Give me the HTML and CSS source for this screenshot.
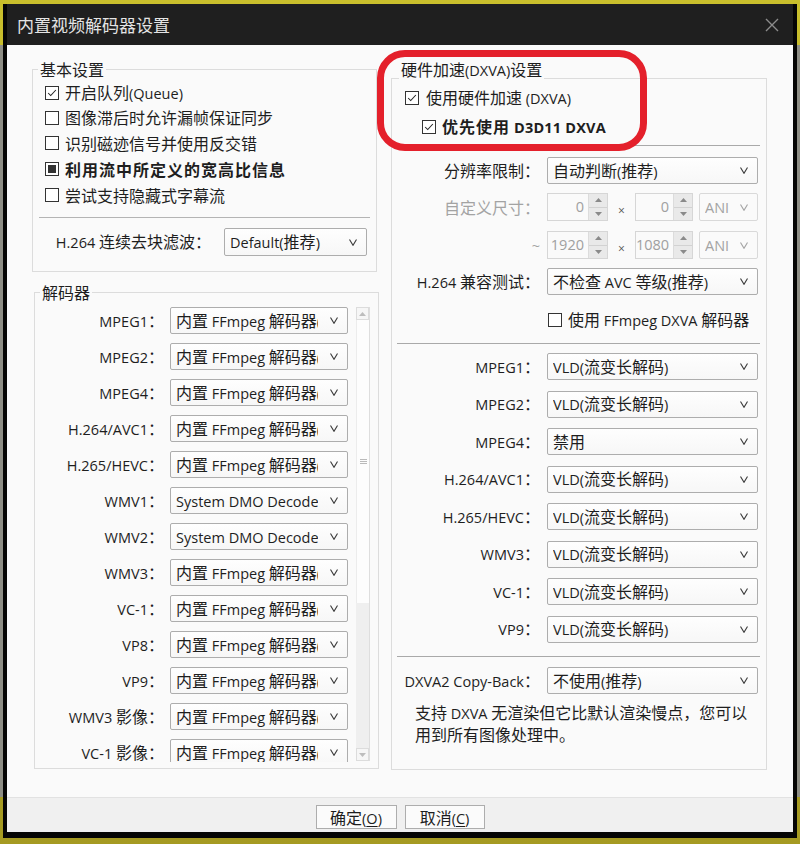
FILE: index.html
```html
<!DOCTYPE html>
<html lang="zh-CN">
<head>
<meta charset="utf-8">
<title>内置视频解码器设置</title>
<link rel="stylesheet" href="styles.css">
</head>
<body>
<div class="window">
  <div class="titlebar">
    <span class="title">内置视频解码器设置</span>
    <svg class="close" width="14" height="14" viewBox="0 0 14 14"><path d="M1 1 L13 13 M13 1 L1 13"/></svg>
  </div>
  <div class="client">
    <div class="col-left">
      <fieldset class="group basic">
        <legend>基本设置</legend>
        <div class="cbrow r25"><span class="cb on"><svg viewBox="0 0 14 14"><path d="M2.5 7 L5.5 10 L11.5 3.5"/></svg></span><span>开启队列<span class="en">(Queue)</span></span></div>
        <div class="cbrow r25"><span class="cb"></span><span>图像滞后时允许漏帧保证同步</span></div>
        <div class="cbrow r26"><span class="cb"></span><span>识别磁迹信号并使用反交错</span></div>
        <div class="cbrow r26 bold"><span class="cb mixed"><i></i></span><span>利用流中所定义的宽高比信息</span></div>
        <div class="cbrow r26"><span class="cb"></span><span>尝试支持隐藏式字幕流</span></div>
        <div class="sep basic-sep"></div>
        <div class="row deblock">
          <span class="lbl"><span class="en">H.264 </span>连续去块滤波：</span>
          <div class="sel w143"><span class="val"><span class="en">Default(</span>推荐<span class="en">)</span></span><svg class="arr" viewBox="0 0 8 7"><path d="M0.5 0.5 L4 6.3 L7.5 0.5"/></svg></div>
        </div>
      </fieldset>

      <fieldset class="group decoders">
        <legend>解码器</legend>
        <div class="viewport">
          <div class="list">
            <div class="drow"><span class="lbl"><span class="en">MPEG1</span>：</span><div class="sel w178"><span class="val">内置<span class="en"> FFmpeg </span>解码器<span class="en">(</span></span><svg class="arr" viewBox="0 0 8 7"><path d="M0.5 0.5 L4 6.3 L7.5 0.5"/></svg></div></div>
            <div class="drow"><span class="lbl"><span class="en">MPEG2</span>：</span><div class="sel w178"><span class="val">内置<span class="en"> FFmpeg </span>解码器<span class="en">(</span></span><svg class="arr" viewBox="0 0 8 7"><path d="M0.5 0.5 L4 6.3 L7.5 0.5"/></svg></div></div>
            <div class="drow"><span class="lbl"><span class="en">MPEG4</span>：</span><div class="sel w178"><span class="val">内置<span class="en"> FFmpeg </span>解码器<span class="en">(</span></span><svg class="arr" viewBox="0 0 8 7"><path d="M0.5 0.5 L4 6.3 L7.5 0.5"/></svg></div></div>
            <div class="drow"><span class="lbl"><span class="en">H.264/AVC1</span>：</span><div class="sel w178"><span class="val">内置<span class="en"> FFmpeg </span>解码器<span class="en">(</span></span><svg class="arr" viewBox="0 0 8 7"><path d="M0.5 0.5 L4 6.3 L7.5 0.5"/></svg></div></div>
            <div class="drow"><span class="lbl"><span class="en">H.265/HEVC</span>：</span><div class="sel w178"><span class="val">内置<span class="en"> FFmpeg </span>解码器<span class="en">(</span></span><svg class="arr" viewBox="0 0 8 7"><path d="M0.5 0.5 L4 6.3 L7.5 0.5"/></svg></div></div>
            <div class="drow"><span class="lbl"><span class="en">WMV1</span>：</span><div class="sel w178"><span class="val"><span class="en">System DMO Decoder</span></span><svg class="arr" viewBox="0 0 8 7"><path d="M0.5 0.5 L4 6.3 L7.5 0.5"/></svg></div></div>
            <div class="drow"><span class="lbl"><span class="en">WMV2</span>：</span><div class="sel w178"><span class="val"><span class="en">System DMO Decoder</span></span><svg class="arr" viewBox="0 0 8 7"><path d="M0.5 0.5 L4 6.3 L7.5 0.5"/></svg></div></div>
            <div class="drow"><span class="lbl"><span class="en">WMV3</span>：</span><div class="sel w178"><span class="val">内置<span class="en"> FFmpeg </span>解码器<span class="en">(</span></span><svg class="arr" viewBox="0 0 8 7"><path d="M0.5 0.5 L4 6.3 L7.5 0.5"/></svg></div></div>
            <div class="drow"><span class="lbl"><span class="en">VC-1</span>：</span><div class="sel w178"><span class="val">内置<span class="en"> FFmpeg </span>解码器<span class="en">(</span></span><svg class="arr" viewBox="0 0 8 7"><path d="M0.5 0.5 L4 6.3 L7.5 0.5"/></svg></div></div>
            <div class="drow"><span class="lbl"><span class="en">VP8</span>：</span><div class="sel w178"><span class="val">内置<span class="en"> FFmpeg </span>解码器<span class="en">(</span></span><svg class="arr" viewBox="0 0 8 7"><path d="M0.5 0.5 L4 6.3 L7.5 0.5"/></svg></div></div>
            <div class="drow"><span class="lbl"><span class="en">VP9</span>：</span><div class="sel w178"><span class="val">内置<span class="en"> FFmpeg </span>解码器<span class="en">(</span></span><svg class="arr" viewBox="0 0 8 7"><path d="M0.5 0.5 L4 6.3 L7.5 0.5"/></svg></div></div>
            <div class="drow"><span class="lbl"><span class="en">WMV3 </span>影像：</span><div class="sel w178"><span class="val">内置<span class="en"> FFmpeg </span>解码器<span class="en">(</span></span><svg class="arr" viewBox="0 0 8 7"><path d="M0.5 0.5 L4 6.3 L7.5 0.5"/></svg></div></div>
            <div class="drow"><span class="lbl"><span class="en">VC-1 </span>影像：</span><div class="sel w178"><span class="val">内置<span class="en"> FFmpeg </span>解码器<span class="en">(</span></span><svg class="arr" viewBox="0 0 8 7"><path d="M0.5 0.5 L4 6.3 L7.5 0.5"/></svg></div></div>
          </div>
          <div class="vscroll">
            <div class="sbbtn"><svg viewBox="0 0 7 4"><path d="M0 4 L3.5 0 L7 4 Z"/></svg></div>
            <div class="thumb"><svg viewBox="0 0 7 5"><path d="M0 0.5 H7 M0 2.5 H7 M0 4.5 H7"/></svg></div>
            <div class="track"></div>
            <div class="sbbtn"><svg viewBox="0 0 7 4"><path d="M0 0 L3.5 4 L7 0 Z"/></svg></div>
          </div>
        </div>
      </fieldset>
    </div>

    <div class="col-right">
      <fieldset class="group dxva">
        <legend>硬件加速<span class="en">(DXVA)</span>设置</legend>
        <div class="cbrow hw1"><span class="cb on"><svg viewBox="0 0 14 14"><path d="M2.5 7 L5.5 10 L11.5 3.5"/></svg></span><span>使用硬件加速<span class="en"> (DXVA)</span></span></div>
        <div class="cbrow hw2 bold"><span class="cb on"><svg viewBox="0 0 14 14"><path d="M2.5 7 L5.5 10 L11.5 3.5"/></svg></span><span>优先使用<span class="en"> D3D11 DXVA</span></span></div>
        <div class="sep rsep s1"></div>

        <div class="row rrow m11"><span class="lbl">分辨率限制：</span><div class="sel w211"><span class="val">自动判断<span class="en">(</span>推荐<span class="en">)</span></span><svg class="arr" viewBox="0 0 8 7"><path d="M0.5 0.5 L4 6.3 L7.5 0.5"/></svg></div></div>

        <div class="row rrow spinrow m9 dis">
          <span class="lbl">自定义尺寸：</span>
          <div class="spin w61"><span class="num en">0</span><div class="btns"><span class="b"><svg viewBox="0 0 7 4"><path d="M0 4 L3.5 0 L7 4 Z"/></svg></span><span class="b"><svg viewBox="0 0 7 4"><path d="M0 0 L3.5 4 L7 0 Z"/></svg></span></div></div>
          <span class="times">×</span>
          <div class="spin w58"><span class="num en">0</span><div class="btns"><span class="b"><svg viewBox="0 0 7 4"><path d="M0 4 L3.5 0 L7 4 Z"/></svg></span><span class="b"><svg viewBox="0 0 7 4"><path d="M0 0 L3.5 4 L7 0 Z"/></svg></span></div></div>
          <div class="sel w59 dsel"><span class="val en">ANI</span><svg class="arr" viewBox="0 0 8 7"><path d="M0.5 0.5 L4 6.3 L7.5 0.5"/></svg></div>
        </div>

        <div class="row rrow spinrow m10 dis">
          <span class="lbl tilde en">~</span>
          <div class="spin w61"><span class="num en">1920</span><div class="btns"><span class="b"><svg viewBox="0 0 7 4"><path d="M0 4 L3.5 0 L7 4 Z"/></svg></span><span class="b"><svg viewBox="0 0 7 4"><path d="M0 0 L3.5 4 L7 0 Z"/></svg></span></div></div>
          <span class="times">×</span>
          <div class="spin w58"><span class="num en">1080</span><div class="btns"><span class="b"><svg viewBox="0 0 7 4"><path d="M0 4 L3.5 0 L7 4 Z"/></svg></span><span class="b"><svg viewBox="0 0 7 4"><path d="M0 0 L3.5 4 L7 0 Z"/></svg></span></div></div>
          <div class="sel w59 dsel"><span class="val en">ANI</span><svg class="arr" viewBox="0 0 8 7"><path d="M0.5 0.5 L4 6.3 L7.5 0.5"/></svg></div>
        </div>

        <div class="row rrow m9"><span class="lbl"><span class="en">H.264 </span>兼容测试：</span><div class="sel w211"><span class="val">不检查<span class="en"> AVC </span>等级<span class="en">(</span>推荐<span class="en">)</span></span><svg class="arr" viewBox="0 0 8 7"><path d="M0.5 0.5 L4 6.3 L7.5 0.5"/></svg></div></div>

        <div class="cbrow hw3"><span class="cb"></span><span>使用<span class="en"> FFmpeg DXVA </span>解码器</span></div>
        <div class="sep rsep s2"></div>

        <div class="row rrow mrow first"><span class="lbl"><span class="en">MPEG1</span>：</span><div class="sel w211"><span class="val"><span class="en">VLD(</span>流变长解码<span class="en">)</span></span><svg class="arr" viewBox="0 0 8 7"><path d="M0.5 0.5 L4 6.3 L7.5 0.5"/></svg></div></div>
        <div class="row rrow mrow"><span class="lbl"><span class="en">MPEG2</span>：</span><div class="sel w211"><span class="val"><span class="en">VLD(</span>流变长解码<span class="en">)</span></span><svg class="arr" viewBox="0 0 8 7"><path d="M0.5 0.5 L4 6.3 L7.5 0.5"/></svg></div></div>
        <div class="row rrow mrow"><span class="lbl"><span class="en">MPEG4</span>：</span><div class="sel w211"><span class="val">禁用</span><svg class="arr" viewBox="0 0 8 7"><path d="M0.5 0.5 L4 6.3 L7.5 0.5"/></svg></div></div>
        <div class="row rrow mrow"><span class="lbl"><span class="en">H.264/AVC1</span>：</span><div class="sel w211"><span class="val"><span class="en">VLD(</span>流变长解码<span class="en">)</span></span><svg class="arr" viewBox="0 0 8 7"><path d="M0.5 0.5 L4 6.3 L7.5 0.5"/></svg></div></div>
        <div class="row rrow mrow"><span class="lbl"><span class="en">H.265/HEVC</span>：</span><div class="sel w211"><span class="val"><span class="en">VLD(</span>流变长解码<span class="en">)</span></span><svg class="arr" viewBox="0 0 8 7"><path d="M0.5 0.5 L4 6.3 L7.5 0.5"/></svg></div></div>
        <div class="row rrow mrow"><span class="lbl"><span class="en">WMV3</span>：</span><div class="sel w211"><span class="val"><span class="en">VLD(</span>流变长解码<span class="en">)</span></span><svg class="arr" viewBox="0 0 8 7"><path d="M0.5 0.5 L4 6.3 L7.5 0.5"/></svg></div></div>
        <div class="row rrow mrow"><span class="lbl"><span class="en">VC-1</span>：</span><div class="sel w211"><span class="val"><span class="en">VLD(</span>流变长解码<span class="en">)</span></span><svg class="arr" viewBox="0 0 8 7"><path d="M0.5 0.5 L4 6.3 L7.5 0.5"/></svg></div></div>
        <div class="row rrow mrow"><span class="lbl"><span class="en">VP9</span>：</span><div class="sel w211"><span class="val"><span class="en">VLD(</span>流变长解码<span class="en">)</span></span><svg class="arr" viewBox="0 0 8 7"><path d="M0.5 0.5 L4 6.3 L7.5 0.5"/></svg></div></div>

        <div class="sep rsep s3"></div>
        <div class="row rrow m10"><span class="lbl"><span class="en">DXVA2 Copy-Back</span>：</span><div class="sel w211"><span class="val">不使用<span class="en">(</span>推荐<span class="en">)</span></span><svg class="arr" viewBox="0 0 8 7"><path d="M0.5 0.5 L4 6.3 L7.5 0.5"/></svg></div></div>
        <p class="desc">支持<span class="en"> DXVA </span>无渲染但它比默认渲染慢点，您可以<br>用到所有图像处理中。</p>
      </fieldset>
    </div>

    <div class="highlight"></div>
  </div>
  <div class="footer">
    <div class="btn w81">确定<span class="en">(<u>O</u>)</span></div>
    <div class="btn w80">取消<span class="en">(<u>C</u>)</span></div>
  </div>
</div>
</body>
</html>
```

FILE: styles.css
```css
* { box-sizing: border-box; }

body {
  margin: 0;
  padding: 4px 0 0 3px;
  width: 800px;
  height: 844px;
  overflow: hidden;
  background:
    linear-gradient(to right, #8e8e86 0 3px, transparent 3px 797px, #8e8e86 797px) 0 45px / 100% 752px no-repeat,
    linear-gradient(#c9bf2c, #a59a22);
  font-family: "Noto Sans CJK SC", sans-serif;
  font-size: 16px;
  color: #1e1e1e;
}

.en {
  font-family: "Open Sans", "Noto Sans CJK SC", sans-serif;
  font-size: 14.5px;
}

.window {
  width: 794px;
  height: 834px;
  border-left: 4px solid #050505;
  border-right: 4px solid #050505;
  border-bottom: 6px solid #050505;
  background: #fafafa;
  display: flex;
  flex-direction: column;
}

.titlebar {
  height: 41px;
  flex: none;
  background: #1f1f1f;
  display: flex;
  align-items: center;
  justify-content: space-between;
  padding: 0 14px 0 10px;
}
.title {
  font-size: 17px;
  color: #e4e4e4;
  line-height: 24px;
}
.close path { stroke: #8c8c8c; stroke-width: 1.4; fill: none; }

.client {
  position: relative;
  height: 752px;
  flex: none;
  display: flex;
  gap: 12px;
  padding: 15px 26px 0 25px;
  background: #fafafa;
}
.col-left { width: 347px; flex: none; }
.col-right { width: 376px; flex: none; }

/* group boxes */
.group {
  margin: 0;
  padding: 0;
  min-inline-size: 0;
  border: 1px solid #dcdcdc;
}
.group legend {
  padding: 0 2px;
  margin-left: 5px;
  height: 18px;
  line-height: 18px;
  white-space: nowrap;
}
.basic { width: 345px; padding: 2px 0 15px; }
.decoders { width: 345px; margin: 11px 0 0 2px; padding: 5px 8px 6px 0; }
.dxva { width: 376px; padding: 0 0 24px; }
.dxva legend { margin-left: 7px; padding-bottom: 18px; height: 36px; }

/* checkbox rows */
.cbrow { display: flex; align-items: center; gap: 6px; line-height: 23px; white-space: nowrap; }
.basic .cbrow { padding-left: 12px; }
.r25 { height: 25px; }
.r26 { height: 26px; }
.bold { font-weight: bold; letter-spacing: 1px; }
.bold .en { letter-spacing: 0.2px; }

.cb {
  width: 14px;
  height: 14px;
  flex: none;
  border: 1px solid #333;
  background: #fff;
  display: flex;
  align-items: center;
  justify-content: center;
}
.cb svg { width: 12px; height: 12px; }
.cb svg path { fill: none; stroke: #222; stroke-width: 1.2; }
.cb.mixed i { display: block; width: 8px; height: 8px; background: #333; }

.sep { height: 1px; background: #b4b4b4; }
.basic-sep { margin: 9px 6px 0 6px; }

/* label + select rows */
.row { display: flex; align-items: center; justify-content: flex-end; white-space: nowrap; }
.lbl { line-height: 23px; }
.deblock { margin-top: 10px; height: 28px; padding-right: 9px; }
.deblock .lbl { margin-right: 13px; }

.sel {
  display: flex;
  align-items: center;
  height: 27px;
  border: 1px solid #adadad;
  border-radius: 2px;
  background: linear-gradient(#fefefe, #f7f7f7);
  padding-left: 5px;
  flex: none;
}
.sel .val { flex: 1; min-width: 0; overflow: hidden; white-space: nowrap; line-height: 23px; }
.sel .arr { width: 8px; height: 7px; flex: none; margin: 0 9px 0 12px; }
.sel .arr path { fill: none; stroke: #3a3a3a; stroke-width: 1.1; }
.deblock .sel { height: 28px; }
.w143 { width: 143px; }
.w178 { width: 178px; }
.w211 { width: 211px; }
.w59 { width: 59px; }

/* decoders list with scrollbar */
.viewport { display: flex; height: 456px; }
.list { flex: 1; overflow: hidden; padding-top: 1px; }
.drow { display: flex; align-items: center; justify-content: flex-end; height: 27px; margin-bottom: 9px; white-space: nowrap; padding-right: 8px; }
.drow .lbl { margin-right: 6px; }

.vscroll {
  width: 14px;
  flex: none;
  margin-top: 1px;
  height: 454px;
  display: flex;
  flex-direction: column;
  background: #efefef;
  border-right: 1px solid #dedede;
}
.sbbtn {
  height: 13px;
  flex: none;
  background: #f6f6f6;
  border: 1px solid #dcdcdc;
  display: flex;
  align-items: center;
  justify-content: center;
}
.sbbtn svg { width: 7px; height: 4px; }
.sbbtn path { fill: #bdbdbd; }
.thumb {
  height: 283px;
  flex: none;
  background: #fdfdfd;
  border-left: 1px solid #ececec;
  display: flex;
  align-items: center;
  justify-content: center;
}
.thumb svg { width: 7px; height: 5px; }
.thumb path { stroke: #a8a8a8; stroke-width: 0.8; fill: none; }
.track { flex: 1; }

/* right group */
.hw1 { height: 22px; margin-top: -9px; padding-left: 13px; gap: 7px; }
.hw2 { height: 22px; margin-top: 7px; padding-left: 30px; }
.hw3 { height: 22px; margin-top: 14px; padding-left: 156px; }
.rsep { margin: 0 6px 0 5px; background: #a9a9a9; }
.s1 { margin-top: 7px; }
.s2 { margin-top: 12px; }
.s3 { margin-top: 13.5px; }
.rrow { padding-right: 8px; }
.rrow .lbl { margin-right: 7px; }
.m9 { margin-top: 9px; }
.m10 { margin-top: 10px; }
.m11 { margin-top: 11px; }
.mrow { margin-top: 10.5px; }
.mrow.first { margin-top: 9px; }

.spinrow { height: 28px; }
.dis .lbl { color: #a3a3a3; }
.tilde { margin-right: 5px; }
.spin {
  display: flex;
  height: 28px;
  border: 1px solid #d6d6d6;
  background: #fafafa;
  flex: none;
}
.w61 { width: 61px; }
.w58 { width: 58px; }
.spin .num { flex: 1; text-align: right; padding-right: 4px; color: #a0a0a0; line-height: 26px; }
.spin .btns { width: 19px; flex: none; display: flex; flex-direction: column; border-left: 1px solid #dcdcdc; }
.spin .b { flex: 1; display: flex; align-items: center; justify-content: center; background: #e9e9e9; }
.spin .b + .b { border-top: 1px solid #d2d2d2; }
.spin .b svg { width: 7px; height: 4px; }
.spin .b path { fill: #8a8a8a; }
.times { width: 27px; flex: none; text-align: center; font-family: "Open Sans", sans-serif; font-size: 12px; color: #555; padding-top: 7px; }
.spinrow .sel { margin-left: 6px; height: 28px; }
.dsel { border-color: #d9d9d9; background: #fafafa; }
.dsel .val { color: #a3a3a3; }
.dsel .arr { margin-left: 4px; }
.dsel .arr path { stroke: #a3a3a3; }

.desc {
  margin: 7.5px 0 0 0;
  padding-left: 23px;
  line-height: 21px;
  white-space: nowrap;
}

/* red annotation */
.highlight {
  position: absolute;
  left: 370px;
  top: 5px;
  width: 270px;
  height: 101px;
  border: 7px solid #e4202b;
  border-radius: 28px;
  pointer-events: none;
}

/* footer */
.footer {
  height: 35px;
  flex: none;
  border-top: 1px solid #e2e2e2;
  background: #f0f0f0;
  display: flex;
  justify-content: center;
  gap: 8px;
  padding: 7px 0 0 0;
}
.btn {
  height: 24px;
  border: 1px solid #adadad;
  background: #fbfbfb;
  text-align: center;
  line-height: 22px;
}
.btn u { text-underline-offset: 2px; }
.w81 { width: 81px; }
.w80 { width: 80px; }
```
